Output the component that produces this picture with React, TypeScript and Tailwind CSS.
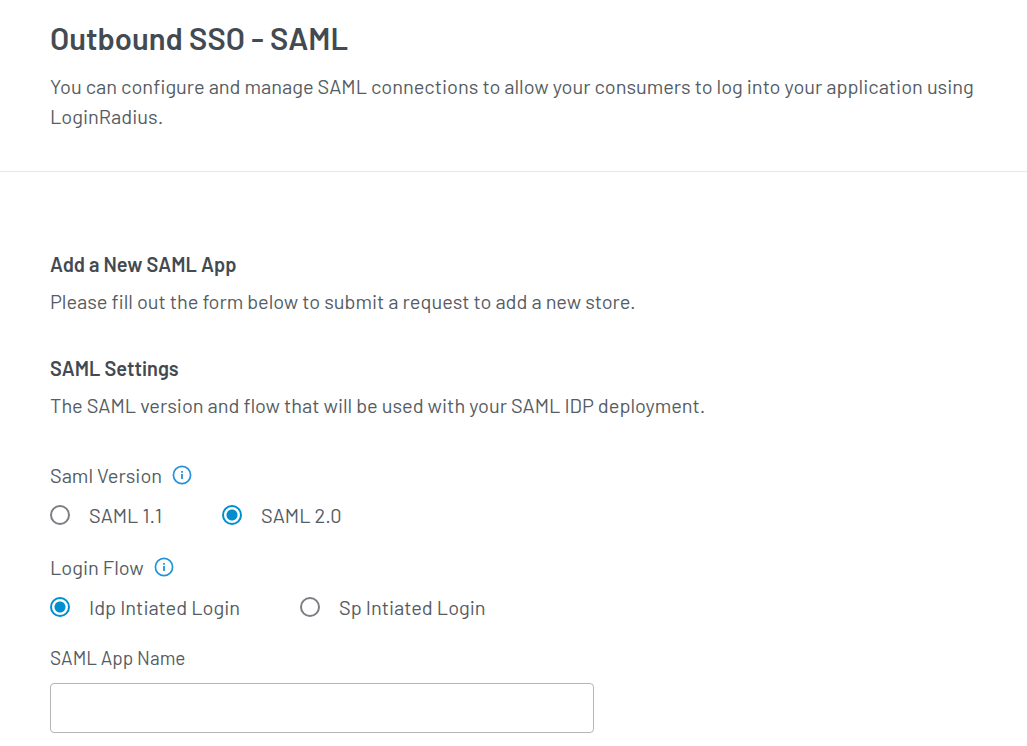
import React from "react";

function InfoIcon() {
  return (
    <svg viewBox="0 0 20 20" className="size-5" fill="none" stroke="#2492d8" aria-hidden="true">
      <circle cx="10" cy="10" r="8.6" strokeWidth="1.7" />
      <path d="M10 9v5" strokeWidth="1.8" />
      <path d="M10 6v1.7" strokeWidth="1.8" />
    </svg>
  );
}

function Radio({ name, label, checked }: { name: string; label: string; checked?: boolean }) {
  return (
    <label className="flex items-center gap-[19px]">
      <input
        type="radio"
        name={name}
        defaultChecked={checked}
        className="size-5 appearance-none rounded-full border-2 border-[#7b7f83] bg-white checked:border-[#008ecf] checked:bg-[radial-gradient(circle,#008ecf_5px,white_6px)]"
      />
      <span>{label}</span>
    </label>
  );
}

function RadioGroup({ title, children }: { title: string; children: React.ReactNode }) {
  return (
    <fieldset>
      <legend className="flex items-center gap-2.5">
        {title}
        <button type="button" aria-label={`About ${title}`}>
          <InfoIcon />
        </button>
      </legend>
      <div className="mt-2.5 flex gap-[60px]">{children}</div>
    </fieldset>
  );
}

export default function App() {
  return (
    <main className="bg-white font-['Barlow','Roboto',sans-serif] text-[20px] leading-[30px] text-[#555c63]">
      <header className="border-b border-[#e5e7e9] px-[50px] pt-[19px] pb-10">
        <h1 className="text-[31px] leading-[38px] font-semibold text-[#434a51]">Outbound SSO - SAML</h1>
        <p className="mt-3.5">
          You can configure and manage SAML connections to allow your consumers to log into your application using
          LoginRadius.
        </p>
      </header>
      <form className="px-[50px] pt-[77px]">
        <section>
          <h2 className="text-[20px] font-semibold text-[#434a51]">Add a New SAML App</h2>
          <p className="mt-[7px]">Please fill out the form below to submit a request to add a new store.</p>
        </section>
        <section className="mt-[37px]">
          <h2 className="text-[20px] font-semibold text-[#434a51]">SAML Settings</h2>
          <p className="mt-[7px]">The SAML version and flow that will be used with your SAML IDP deployment.</p>
        </section>
        <div className="mt-10 flex flex-col gap-[22px]">
          <RadioGroup title="Saml Version">
            <Radio name="version" label="SAML 1.1" />
            <Radio name="version" label="SAML 2.0" checked />
          </RadioGroup>
          <RadioGroup title="Login Flow">
            <Radio name="flow" label="Idp Intiated Login" checked />
            <Radio name="flow" label="Sp Intiated Login" />
          </RadioGroup>
        </div>
        <label htmlFor="app-name" className="mt-[21px] block text-[19px]">SAML App Name</label>
        <input id="app-name" type="text" className="mt-2.5 mb-3 block h-[50px] w-full max-w-[544px] rounded border border-[#b5b5b5] px-4" />
      </form>
    </main>
  );
}
